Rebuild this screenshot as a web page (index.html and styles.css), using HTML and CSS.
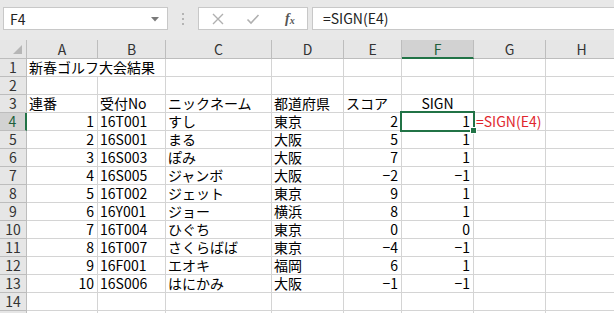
FILE: index.html
```html
<!DOCTYPE html>
<html lang="ja">
<head>
    <meta charset="UTF-8">
    <title>SIGN</title>
    <link rel="stylesheet" href="styles.css">
</head>
<body>
    <div class="formula-bar">
        <div class="name-box">
            <span>F4</span>
            <svg class="drop" width="8" height="5" viewBox="0 0 8 5"><path d="M0 0H8L4 4.5Z" fill="#7a7a7a"/></svg>
        </div>
        <div class="grip"><i></i><i></i><i></i></div>
        <div class="fx-buttons">
            <svg width="14" height="14" viewBox="0 0 14 14"><path d="M2 2L12 12M12 2L2 12" stroke="#b0b0b0" stroke-width="1.4" fill="none"/></svg>
            <svg width="14" height="14" viewBox="0 0 14 14"><path d="M1.5 7.5L5 11L12.5 3" stroke="#b0b0b0" stroke-width="1.6" fill="none"/></svg>
            <span class="fx">f<sub>x</sub></span>
        </div>
        <div class="formula-input">=SIGN(E4)</div>
    </div>

    <div class="sheet" id="sheet"></div>

    <script>
        const cols = ['A', 'B', 'C', 'D', 'E', 'F', 'G', 'H'];
        const data = [
            [1, '16T001', 'すし', '東京', 2, 1],
            [2, '16S001', 'まる', '大阪', 5, 1],
            [3, '16S003', 'ぽみ', '大阪', 7, 1],
            [4, '16S005', 'ジャンボ', '大阪', -2, -1],
            [5, '16T002', 'ジェット', '東京', 9, 1],
            [6, '16Y001', 'ジョー', '横浜', 8, 1],
            [7, '16T004', 'ひぐち', '東京', 0, 0],
            [8, '16T007', 'さくらばば', '東京', -4, -1],
            [9, '16F001', 'エオキ', '福岡', 6, 1],
            [10, '16S006', 'はにかみ', '大阪', -1, -1]
        ];

        function num(n) {
            return n < 0 ? '\u2212' + Math.abs(n) : String(n);
        }

        let html = '<div class="corner"><span class="tri"></span></div>';
        cols.forEach(c => {
            html += `<div class="col-head${c === 'F' ? ' active' : ''}">${c}</div>`;
        });

        for (let r = 1; r <= 15; r++) {
            // row 15 only peeks in at the bottom edge
            html += `<div class="row-head${r === 4 ? ' active' : ''}">${r < 15 ? r : ''}</div>`;
            if (r === 1) {
                html += '<div class="cell wide">新春ゴルフ大会結果</div>';
                for (let i = 2; i < 8; i++) html += '<div class="cell"></div>';
            } else if (r === 3) {
                html += '<div class="cell">連番</div><div class="cell">受付No</div><div class="cell">ニックネーム</div>';
                html += '<div class="cell">都道府県</div><div class="cell">スコア</div><div class="cell center">SIGN</div>';
                html += '<div class="cell"></div><div class="cell"></div>';
            } else if (r >= 4 && r <= 13) {
                const d = data[r - 4];
                html += `<div class="cell num">${d[0]}</div>`;
                html += `<div class="cell">${d[1]}</div>`;
                html += `<div class="cell">${d[2]}</div>`;
                html += `<div class="cell">${d[3]}</div>`;
                html += `<div class="cell num">${num(d[4])}</div>`;
                html += `<div class="cell num${r === 4 ? ' selected' : ''}">${num(d[5])}</div>`;
                html += r === 4 ? '<div class="cell note">=SIGN(E4)</div>' : '<div class="cell"></div>';
                html += '<div class="cell"></div>';
            } else {
                for (let i = 0; i < 8; i++) html += '<div class="cell"></div>';
            }
        }

        document.getElementById('sheet').innerHTML = html;
    </script>
</body>
</html>
```

FILE: styles.css
```css
body { margin: 0; width: 614px; height: 313px; overflow: hidden; background: #fff; font-family: "Noto Sans CJK JP", sans-serif; color: #000; }

.formula-bar { height: 40px; box-sizing: border-box; padding: 7px 0 0 3px; background: #e8e8e8; display: flex; align-items: flex-start; }
.name-box { width: 165px; height: 23px; box-sizing: border-box; background: #fff; border: 1px solid #c8c8c8; display: flex; align-items: center; justify-content: space-between; padding: 0 8px 0 6px; font-size: 14px; color: #222; }
.drop { margin-top: 1px; }
.grip { width: 30px; height: 23px; display: flex; flex-direction: column; align-items: center; justify-content: center; gap: 3px; }
.grip i { display: block; width: 2px; height: 2px; background: #b4b4b4; }
.fx-buttons { width: 110px; height: 23px; box-sizing: border-box; background: #fff; border: 1px solid #c8c8c8; display: flex; align-items: center; gap: 21px; padding-left: 12px; }
.fx { font-family: "Liberation Serif", serif; font-style: italic; font-weight: bold; font-size: 14px; color: #555; margin-left: 4px; }
.fx sub { font-size: 10px; vertical-align: -1px; }
.formula-input { flex: 1; height: 23px; box-sizing: border-box; margin-left: 4px; background: #fff; border: 1px solid #c8c8c8; border-right: 0; font-size: 14px; line-height: 21px; padding-left: 10px; color: #222; }

.sheet { display: grid; grid-template-columns: 27px 71px 68px 106px 72px 58px 72px 72px 72px; grid-template-rows: 19px; grid-auto-rows: 18px; font-size: 14px; }
.sheet > div { box-sizing: border-box; border-right: 1px solid #d4d4d4; border-bottom: 1px solid #d4d4d4; white-space: nowrap; line-height: 17px; }

.corner { background: #e6e6e6; border-color: #bdbdbd !important; position: relative; }
.tri { position: absolute; right: 4px; bottom: 4px; width: 0; height: 0; border-left: 9px solid transparent; border-bottom: 9px solid #b6b6b6; }
.col-head { background: #e6e6e6; border-right-color: #bdbdbd !important; border-bottom-color: #bdbdbd !important; text-align: center; color: #333; line-height: 18px !important; }
.col-head.active { background: #d2d2d2; border-bottom: 2px solid #217346 !important; color: #1e5f3b; }
.row-head { background: #e6e6e6; border-right-color: #bdbdbd !important; border-bottom-color: #bdbdbd !important; text-align: center; color: #333; }
.row-head.active { background: #d2d2d2; border-right: 2px solid #217346 !important; color: #1e5f3b; }

.cell { padding: 0 2px; overflow: visible; }
.wide { grid-column: span 2; }
.num { text-align: right; padding-right: 3px; }
.center { text-align: center; }
.note { color: #e0262d; padding-left: 2px; }
.selected { position: relative; }
.selected::before { content: ""; position: absolute; left: -2px; top: -2px; right: -2px; bottom: -2px; border: 2px solid #217346; }
.selected::after { content: ""; position: absolute; right: -4px; bottom: -4px; width: 5px; height: 5px; background: #217346; border: 1px solid #fff; }
```
